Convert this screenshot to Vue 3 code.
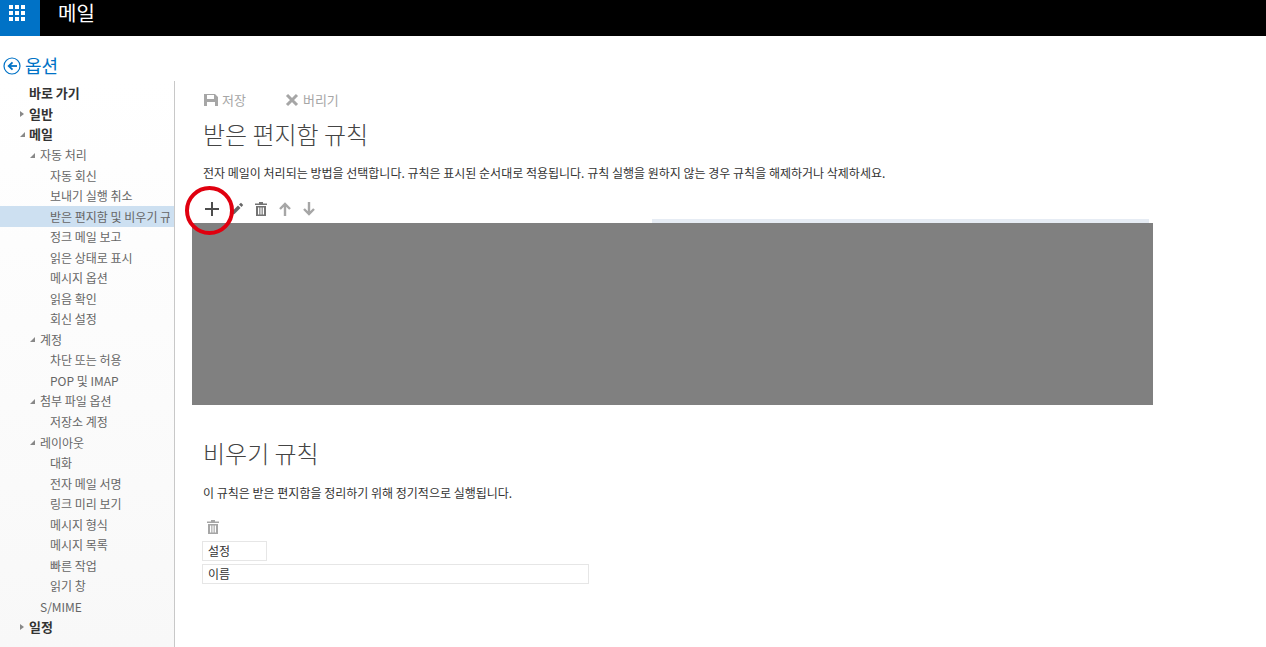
<script setup>
const nav = [
  { t: '바로 가기', l: 0, b: true },
  { t: '일반', l: 0, b: true, a: 'r' },
  { t: '메일', l: 0, b: true, a: 'd' },
  { t: '자동 처리', l: 1, a: 'd' },
  { t: '자동 회신', l: 2 },
  { t: '보내기 실행 취소', l: 2 },
  { t: '받은 편지함 및 비우기 규칙', l: 2, s: true },
  { t: '정크 메일 보고', l: 2 },
  { t: '읽은 상태로 표시', l: 2 },
  { t: '메시지 옵션', l: 2 },
  { t: '읽음 확인', l: 2 },
  { t: '회신 설정', l: 2 },
  { t: '계정', l: 1, a: 'd' },
  { t: '차단 또는 허용', l: 2 },
  { t: 'POP 및 IMAP', l: 2 },
  { t: '첨부 파일 옵션', l: 1, a: 'd' },
  { t: '저장소 계정', l: 2 },
  { t: '레이아웃', l: 1, a: 'd' },
  { t: '대화', l: 2 },
  { t: '전자 메일 서명', l: 2 },
  { t: '링크 미리 보기', l: 2 },
  { t: '메시지 형식', l: 2 },
  { t: '메시지 목록', l: 2 },
  { t: '빠른 작업', l: 2 },
  { t: '읽기 창', l: 2 },
  { t: 'S/MIME', l: 1 },
  { t: '일정', l: 0, b: true, a: 'r' }
]
</script>

<template>
  <div class="page">
    <header class="topbar">
      <div class="tile">
        <svg width="16" height="16" viewBox="0 0 16 16" fill="#fff">
          <rect x="0" y="0" width="4" height="4" /><rect x="6" y="0" width="4" height="4" /><rect x="12" y="0" width="4" height="4" />
          <rect x="0" y="6" width="4" height="4" /><rect x="6" y="6" width="4" height="4" /><rect x="12" y="6" width="4" height="4" />
          <rect x="0" y="12" width="4" height="4" /><rect x="6" y="12" width="4" height="4" /><rect x="12" y="12" width="4" height="4" />
        </svg>
      </div>
      <div class="app-name">메일</div>
    </header>

    <div class="options">
      <svg class="back" width="18" height="18" viewBox="0 0 18 18" fill="none" stroke="#0072c6">
        <circle cx="9" cy="9" r="8" stroke-width="1.2" />
        <path d="M14 9H6.500" stroke-width="1.800" />
        <path d="M9.500 5.400 5.700 9l3.800 3.600" stroke-width="1.800" />
      </svg>
      <span>옵션</span>
    </div>

    <div class="main">
      <nav class="side">
        <div
          v-for="n in nav"
          :key="n.t"
          class="row"
          :class="['lv' + n.l, { bold: n.b, sel: n.s }]"
        >
          <i v-if="n.a" class="arrow" :class="n.a"></i>
          <span class="label">{{ n.t }}</span>
        </div>
      </nav>

      <section class="content">
        <div class="actions">
          <span class="act">
            <svg width="14" height="14" viewBox="0 0 14 14" fill="#a6a6a6">
              <path d="M0 1h11l3 3v9H0zM3 2v4h7V2zM3 9v4h8V9z" fill-rule="evenodd" />
            </svg>
            저장
          </span>
          <span class="act">
            <svg width="14" height="14" viewBox="0 0 14 14" stroke="#a6a6a6" stroke-width="3" fill="none">
              <path d="M2 2l10 10M12 2 2 12" />
            </svg>
            버리기
          </span>
        </div>

        <h1 class="title">받은 편지함 규칙</h1>
        <p class="desc">전자 메일이 처리되는 방법을 선택합니다. 규칙은 표시된 순서대로 적용됩니다. 규칙 실행을 원하지 않는 경우 규칙을 해제하거나 삭제하세요.</p>

        <div class="tools">
          <span class="add">
            <svg width="14" height="14" viewBox="0 0 14 14" stroke="#4d4d4d" stroke-width="2" fill="none">
              <path d="M7 0v14M0 7h14" />
            </svg>
            <i class="ring"></i>
          </span>
          <svg width="14" height="14" viewBox="0 0 14 14" fill="#666">
            <path d="M1 13l1-3.500 6-6L10.500 6l-6 6z" />
            <path d="M9 2.500 11 .8 13.200 3 11.500 5z" />
          </svg>
          <svg width="14" height="14" viewBox="0 0 14 14" fill="#737373">
            <path fill-rule="evenodd" d="M5 0h4v1.500h4V3H1V1.500h4zM2 4h10v10H2zM4 5.500V12.500H5.300V5.500zM6.400 5.500V12.500H7.600V5.500zM8.700 5.500V12.500H10V5.500z" />
          </svg>
          <svg width="14" height="14" viewBox="0 0 14 14" stroke="#a6a6a6" stroke-width="2.400" fill="none">
            <path d="M7 14V2M2 7l5-5 5 5" />
          </svg>
          <svg width="14" height="14" viewBox="0 0 14 14" stroke="#a6a6a6" stroke-width="2.400" fill="none">
            <path d="M7 0v12M2 7l5 5 5-5" />
          </svg>
        </div>

        <div class="table-wrap">
          <div class="table-head"></div>
          <div class="redacted"></div>
        </div>

        <h1 class="title second">비우기 규칙</h1>
        <p class="desc desc2">이 규칙은 받은 편지함을 정리하기 위해 정기적으로 실행됩니다.</p>

        <svg class="trash2" width="14" height="14" viewBox="0 0 14 14" fill="#a6a6a6">
          <path fill-rule="evenodd" d="M5 0h4v1.500h4V3H1V1.500h4zM2 4h10v10H2zM4 5.500V12.500H5.300V5.500zM6.400 5.500V12.500H7.600V5.500zM8.700 5.500V12.500H10V5.500z" />
        </svg>
        <div class="cell short">설정</div>
        <div class="cell long">이름</div>
      </section>
    </div>
  </div>
</template>

<style scoped>
.page {
  width: 1266px;
  height: 647px;
  overflow: hidden;
  background: #fff;
  font-family: "Noto Sans CJK KR", "Noto Sans", sans-serif;
  color: #333;
}
.topbar {
  height: 36px;
  background: #000;
  display: flex;
}
.tile {
  width: 40px;
  background: #0072c6;
  display: flex;
  align-items: flex-start;
  justify-content: center;
  padding: 5px 6px 0 0;
  box-sizing: border-box;
}
.app-name {
  margin-left: 18px;
  color: #fff;
  font-size: 20px;
  line-height: 26px;
}
.options {
  height: 45px;
  display: flex;
  align-items: center;
  padding: 13px 0 0 3px;
  box-sizing: border-box;
  color: #0072c6;
  font-size: 18px;
}
.back {
  margin-right: 4px;
  margin-top: 2px;
}
.main {
  display: flex;
}
.side {
  width: 175px;
  height: 566px;
  box-sizing: border-box;
  border-right: 1px solid #c8c8c8;
  padding-top: 2px;
  background: linear-gradient(#fff, #f8f8f8);
  overflow: hidden;
  flex: none;
}
.row {
  height: 20.54px;
  line-height: 20.54px;
  font-size: 12px;
  color: #666;
  white-space: nowrap;
  overflow: hidden;
  position: relative;
  display: flex;
  align-items: center;
}
.label {
  overflow: hidden;
  min-width: 0;
  padding-top: 1px;
}
.lv0 { padding-left: 29px; }
.lv1 { padding-left: 40px; }
.lv2 { padding-left: 50px; }
.bold {
  font-weight: 700;
  font-size: 13px;
  color: #333;
}
.bold .label {
  padding-top: 0;
}
.sel {
  background: #cde0f1;
  padding-right: 4px;
}
.arrow {
  position: absolute;
  width: 0;
  height: 0;
  top: 7px;
}
.lv0 .arrow { left: 20px; }
.lv1 .arrow { left: 30px; }
.arrow.r {
  border-left: 4px solid #888;
  border-top: 3.5px solid transparent;
  border-bottom: 3.5px solid transparent;
}
.arrow.d {
  top: 8px;
  border-bottom: 5px solid #888;
  border-left: 5px solid transparent;
}
.content {
  flex: 1;
  padding: 0 0 0 17px;
  min-width: 0;
}
.actions {
  display: flex;
  gap: 39px;
  margin: 9px 0 0 12px;
  height: 19px;
  align-items: center;
  color: #a6a6a6;
  font-size: 13px;
}
.act {
  display: flex;
  align-items: center;
  gap: 4px;
}
.title {
  margin: 7px 0 0 11px;
  font-size: 24px;
  line-height: 36px;
  font-weight: 300;
  color: #444;
}
.desc {
  margin: 12px 0 0 11px;
  font-size: 12px;
  line-height: 17px;
  color: #333;
  white-space: nowrap;
}
.tools {
  display: flex;
  align-items: center;
  gap: 10px;
  margin: 18px 0 0 13px;
  height: 20px;
}
.add {
  position: relative;
  z-index: 1;
  display: flex;
  margin-right: 1px;
}
.ring {
  position: absolute;
  left: -20px;
  top: -16px;
  width: 49px;
  height: 49px;
  border: 4.5px solid #e0000f;
  border-radius: 50%;
  box-sizing: border-box;
}
.table-wrap {
  position: relative;
  width: 961px;
  margin-top: 4px;
  height: 182px;
}
.table-head {
  position: absolute;
  left: 460px;
  top: -4px;
  width: 497px;
  height: 4px;
  background: #e6ecf4;
}
.redacted {
  height: 182px;
  background: #808080;
}
.second {
  margin-top: 30px;
}
.desc2 {
  margin-top: 13px;
}
.trash2 {
  display: block;
  margin: 19px 0 0 14px;
}
.cell {
  margin-left: 10px;
  box-sizing: border-box;
  border: 1px solid #e6e6e6;
  font-size: 12px;
  line-height: 18px;
  height: 20px;
  padding-left: 5px;
  color: #333;
}
.short {
  width: 65px;
  margin-top: 7px;
}
.long {
  width: 387px;
  margin-top: 3px;
}
</style>
